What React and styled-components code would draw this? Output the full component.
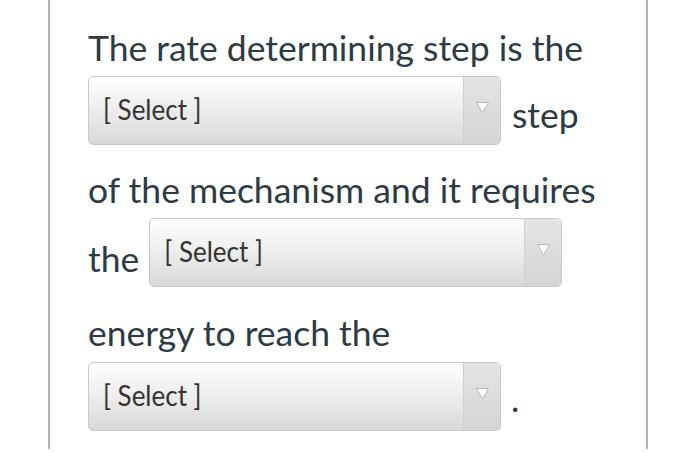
import React from "react";
import styled, { createGlobalStyle } from "styled-components";

const Global = createGlobalStyle`
  html, body { margin: 0; padding: 0; background: #fff; }
  body { width: 700px; height: 452px; overflow: hidden; }
`;

const Card = styled.div`
  margin-left: 48px;
  width: 600px;
  height: 449px;
  border-left: 2px solid #b4b4b4;
  border-right: 2px solid #b4b4b4;
  padding: 28px 0 0 38px;
  box-sizing: border-box;
  display: flex;
  flex-direction: column;
  font-family: Lato, "Noto Sans", sans-serif;
  color: #2d3b45;
  font-size: 35.5px;
`;

const TextLine = styled.div`
  height: 40px;
  line-height: 40px;
  margin-top: ${(p) => (p.$first ? 0 : p.$mt || 25)}px;
  white-space: nowrap;
`;

const SelectLine = styled.div`
  display: flex;
  align-items: flex-end;
  gap: ${(p) => p.$gap || 11}px;
  height: 69px;
  margin-top: ${(p) => p.$mt || 8}px;
  white-space: nowrap;
`;

const Word = styled.span`
  line-height: ${(p) => p.$lh || 60}px;
`;

const SelectBox = styled.div`
  width: 413px;
  height: 69px;
  box-sizing: border-box;
  border: 1px solid #c9c9c9;
  border-radius: 5px;
  background: linear-gradient(#ffffff, #d9d9d9);
  display: flex;
  align-items: center;
  flex: none;
  overflow: hidden;
`;

const SelectLabel = styled.span`
  flex: 1;
  padding-left: 14px;
  font-family: Lato, "Noto Sans", sans-serif;
  font-size: 26px;
  line-height: 1;
  color: #333;
  transform: scaleY(1.1);
  margin-top: -4px;
`;

const ArrowCell = styled.div`
  width: 37px;
  height: 100%;
  border-left: 1px solid #d0d0d0;
  background: linear-gradient(#e4e4e4, #d5d5d5);
  display: flex;
  justify-content: center;
  padding-top: 25px;
  box-sizing: border-box;
`;

const Select = () => (
  <SelectBox>
    <SelectLabel>[ Select ]</SelectLabel>
    <ArrowCell>
      <svg width="13" height="12" viewBox="0 0 13 12">
        <path d="M0.5 0.5 H12.5 L6.5 11 Z" fill="#fff" stroke="#b5b5b5" strokeWidth="1" />
      </svg>
    </ArrowCell>
  </SelectBox>
);

export default function App() {
  return (
    <>
      <Global />
      <Card>
        <TextLine $first>The rate determining step is the</TextLine>
        <SelectLine>
          <Select />
          <Word $lh={61}>step</Word>
        </SelectLine>
        <TextLine>of the mechanism and it requires</TextLine>
        <SelectLine $gap={10}>
          <Word $lh={57}>the</Word>
          <Select />
        </SelectLine>
        <TextLine $mt={26}>energy to reach the</TextLine>
        <SelectLine $gap={10} $mt={9}>
          <Select />
          <Word $lh={64}>.</Word>
        </SelectLine>
      </Card>
    </>
  );
}
